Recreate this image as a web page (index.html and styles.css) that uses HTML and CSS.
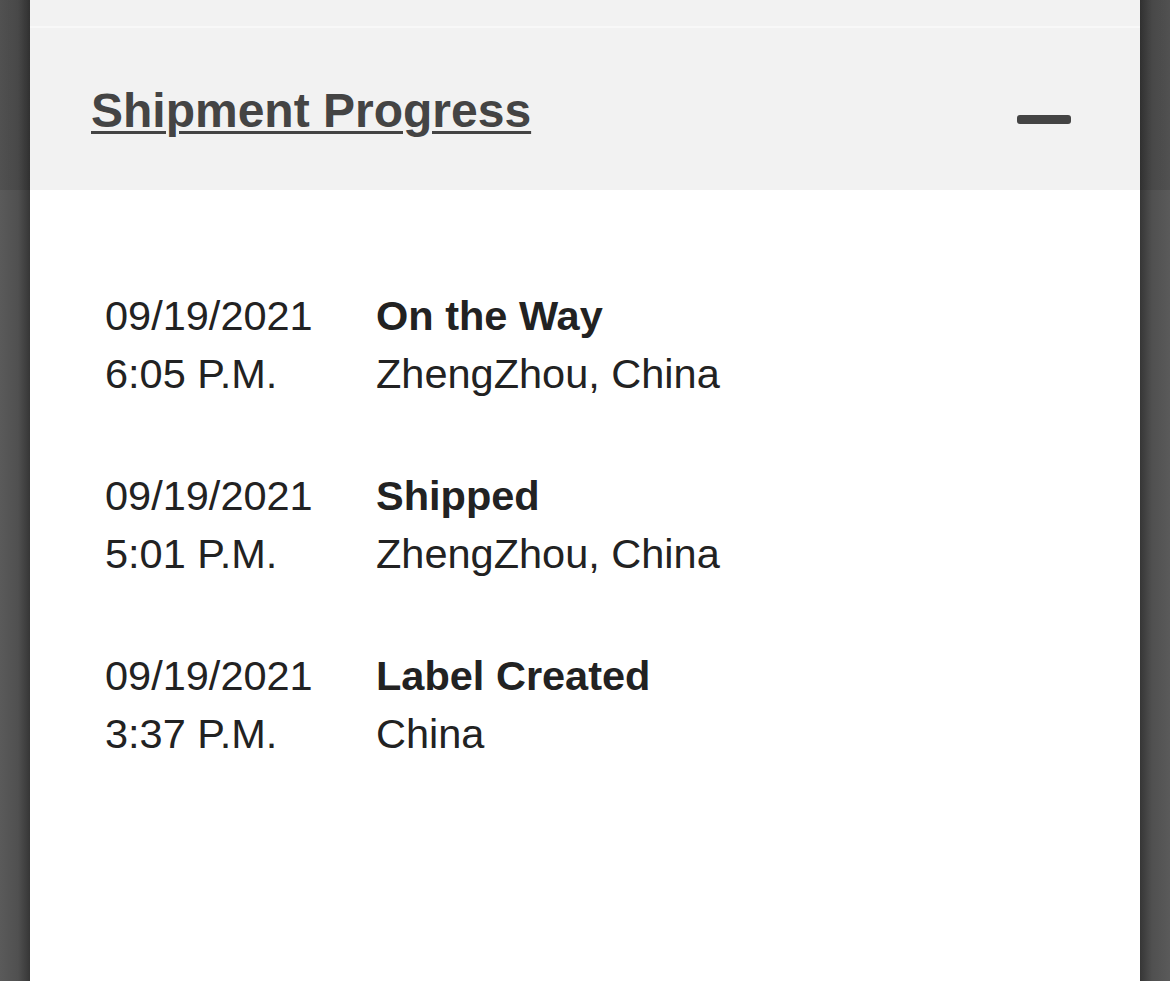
FILE: index.html
```html
<!DOCTYPE html>
<html lang="en">
<head>
    <meta charset="UTF-8">
    <title>Shipment Progress</title>
    <link rel="stylesheet" href="styles.css">
</head>
<body>
<div class="sheet">
    <div class="top-strip"></div>
    <div class="section-head">
        <a class="section-title" href="#">Shipment Progress</a>
        <span class="collapse-icon"></span>
    </div>
    <ul class="events">
        <li class="event">
            <div class="event-time">09/19/2021<br/>6:05 P.M.</div>
            <div class="event-info"><b>On the Way</b><br/>ZhengZhou, China</div>
        </li>
        <li class="event">
            <div class="event-time">09/19/2021<br/>5:01 P.M.</div>
            <div class="event-info"><b>Shipped</b><br/>ZhengZhou, China</div>
        </li>
        <li class="event">
            <div class="event-time">09/19/2021<br/>3:37 P.M.</div>
            <div class="event-info"><b>Label Created</b><br/>China</div>
        </li>
    </ul>
</div>
</body>
</html>
```

FILE: styles.css
```css
html, body {
    margin: 0;
    height: 981px;
    overflow: hidden;
}

body {
    font-family: "Liberation Sans", Arial, sans-serif;
    background:
        linear-gradient(rgba(0, 0, 0, 0.1), rgba(0, 0, 0, 0.1)) 0 0 / 100% 190px no-repeat,
        linear-gradient(to right, #5a5a5a 0, #505050 18px, #363636 30px, transparent 30px) left top / 30px 100% no-repeat,
        linear-gradient(to left, #5a5a5a 0, #505050 18px, #363636 30px, transparent 30px) right top / 30px 100% no-repeat,
        #4a4a4a;
}

.sheet {
    margin: 0 30px;
    height: 981px;
    background: #fff;
}

.top-strip {
    height: 26px;
    background: #f2f2f2;
    border-bottom: 2px solid #f8f8f8;
}

.section-head {
    height: 162px;
    box-sizing: border-box;
    padding: 0 69px 0 61px;
    background: #f2f2f2;
    display: flex;
    align-items: center;
    justify-content: space-between;
}

.section-title {
    font-size: 48px;
    font-weight: bold;
    color: #444;
    text-decoration: underline;
    text-decoration-thickness: 3px;
    text-underline-offset: 4px;
    margin-top: 2px;
}

.collapse-icon {
    display: block;
    width: 54px;
    height: 9px;
    border-radius: 3px;
    background: #444;
    margin-top: 21px;
}

.events {
    list-style: none;
    margin: 0;
    padding: 97px 0 0 75px;
}

.event {
    display: grid;
    grid-template-columns: 271px 1fr;
    font-size: 41.5px;
    line-height: 58px;
    color: #222;
    margin-bottom: 64px;
}
```
